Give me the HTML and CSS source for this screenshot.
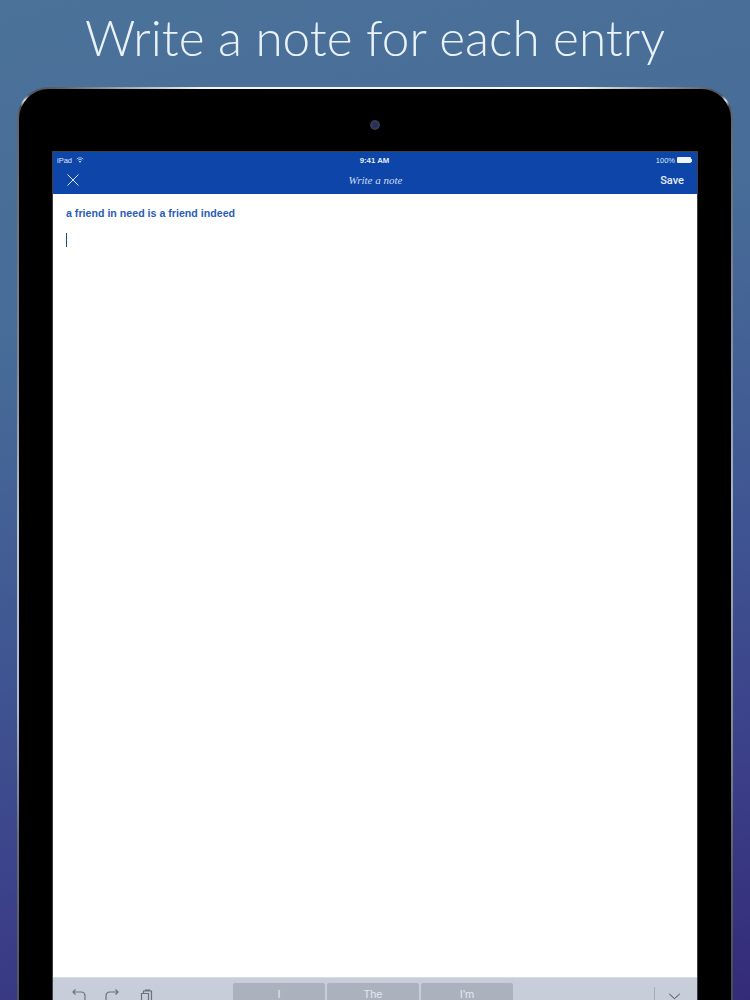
FILE: index.html
```html
<!DOCTYPE html>
<html lang="en">
<head>
<meta charset="utf-8">
<title>Write a note for each entry</title>
<link rel="stylesheet" href="styles.css">
</head>
<body>
<h1 class="headline">Write a note for each entry</h1>
<div class="device-rim">
  <div class="device">
    <div class="camera-row"><span class="camera"></span></div>
    <div class="screen">
      <div class="status-bar">
        <div class="status-left">
          <span>iPad</span>
          <svg class="wifi" viewBox="0 0 10 8" width="8" height="6"><path d="M0.600 2.700C3.100 0.400 6.900 0.400 9.400 2.700M2.200 4.300C3.800 2.900 6.200 2.900 7.800 4.300" stroke="#dfe8f8" stroke-width="1" fill="none"/><path d="M5 7.800 3.500 5.900C4.400 5.200 5.600 5.200 6.500 5.900Z" fill="#dfe8f8"/></svg>
        </div>
        <div class="status-time">9:41 AM</div>
        <div class="status-right">
          <span>100%</span>
          <span class="battery"></span><span class="battery-tip"></span>
        </div>
      </div>
      <div class="nav-bar">
        <svg class="close-icon" viewBox="0 0 12 12" width="12" height="12"><path d="M0.500 0.500 11.500 11.500M11.500 0.500 0.500 11.500" stroke="#dbe4f5" stroke-width="1" fill="none"/></svg>
        <div class="nav-title">Write a note</div>
        <div class="nav-save">Save</div>
      </div>
      <div class="editor">
        <p class="note-prompt">a friend in need is a friend indeed</p>
        <span class="caret"></span>
      </div>
      <div class="kb-toolbar">
        <div class="kb-tools">
          <svg class="tool" viewBox="0 0 16 16" width="16" height="16"><path d="M2 4H10C12.500 4 14 5.500 14 8V13M4.500 1.500 2 4 4.500 6.500" stroke="#6a7280" stroke-width="1.200" fill="none"/></svg>
          <svg class="tool" viewBox="0 0 16 16" width="16" height="16"><path d="M14 4H6C3.500 4 2 5.500 2 8V13M11.500 1.500 14 4 11.500 6.500" stroke="#6a7280" stroke-width="1.200" fill="none"/></svg>
          <svg class="tool" viewBox="0 0 16 16" width="16" height="16"><path d="M4.500 5.500H11.500V16H4.500ZM6.500 5.500V3H14.500V12.500H11.500M8.500 3V2H12.500V3" stroke="#6a7280" stroke-width="1.200" fill="none"/></svg>
        </div>
        <div class="suggestions">
          <div class="suggestion">I</div>
          <div class="suggestion">The</div>
          <div class="suggestion">I'm</div>
        </div>
        <div class="kb-hide">
          <svg viewBox="0 0 14 8" width="13" height="7"><path d="M1 1 7 6.500 13 1" stroke="#3b4048" stroke-width="1.100" fill="none"/></svg>
        </div>
      </div>
    </div>
  </div>
</div>
</body>
</html>
```
FILE: styles.css
```css
* { box-sizing: border-box; }
html, body { margin: 0; height: 1000px; }
body {
  width: 750px;
  overflow: hidden;
  background: linear-gradient(168deg, #4b7299 0%, #476c98 30%, #3f5592 58%, #3b3f88 80%, #342b78 100%);
  font-family: "Liberation Sans", Arial, sans-serif;
  display: flex;
  flex-direction: column;
}
.headline {
  margin: 0;
  height: 87px;
  padding-top: 7px;
  text-align: center;
  font-family: Lato, "Open Sans", sans-serif;
  font-weight: 300;
  font-size: 49.500px;
  line-height: 60px;
  color: #eaf2f9;
  white-space: nowrap;
}
.device-rim {
  flex: 1;
  margin: 0 17px;
  padding: 2px 2px 0;
  border-radius: 32px 32px 0 0;
  background:
    radial-gradient(circle at 8px 14px, #e6ebf0 0, rgba(230, 235, 240, 0) 7px) no-repeat,
    radial-gradient(circle at 708px 14px, #f4f6f8 0, rgba(244, 246, 248, 0) 6px) no-repeat,
    linear-gradient(90deg, #4a4f58 0%, #5c616b 6%, #aab0b8 16%, #f2f4f6 26%, #f6f7f9 78%, #8d909a 90%, #4b4d5a 100%) top / 100% 2px no-repeat,
    linear-gradient(180deg, #5c6068 0%, #7d8792 30%, #b7c6d4 48%, #aebad0 68%, #666c7e 82%, #4d5262 100%) left / 2px 100% no-repeat,
    linear-gradient(180deg, #5c6068 0%, #8b94a8 30%, #a8b4c4 45%, #7f8794 72%, #5b5e6c 85%, #4a4858 100%) right / 2px 100% no-repeat,
    #50545e;
}
.device {
  height: 100%;
  background: #000;
  border-radius: 30px 30px 0 0;
  padding: 0 34px;
  display: flex;
  flex-direction: column;
}
.camera-row {
  height: 63px;
  flex: none;
  display: flex;
  justify-content: center;
  padding-top: 31px;
}
.camera {
  width: 10px;
  height: 10px;
  border-radius: 50%;
  background: radial-gradient(circle, #23305f 0 30%, #3a3d4a 60%, #1c1c22 100%);
}
.screen {
  flex: 1;
  display: flex;
  flex-direction: column;
  background: #fff;
  min-height: 0;
  box-shadow: 0 0 0 1px #3c3f45;
}
.status-bar {
  height: 16px;
  flex: none;
  display: grid;
  grid-template-columns: 1fr auto 1fr;
  align-items: center;
  padding: 0 5px 0 4px;
  background: #0d45a8;
  color: #dfe8f8;
  font-size: 7.500px;
}
.status-left { display: flex; align-items: center; gap: 4px; }
.status-time { font-size: 7.800px; font-weight: bold; color: #e4ecfa; }
.status-right { display: flex; align-items: center; justify-content: flex-end; gap: 2px; }
.battery { width: 14px; height: 6px; background: #f2f5fb; border-radius: 1px; }
.battery-tip { width: 1px; height: 3px; background: #dfe8f8; margin-left: -2px; }
.nav-bar {
  height: 26px;
  flex: none;
  display: grid;
  grid-template-columns: 1fr auto 1fr;
  align-items: center;
  padding: 0 13px 2px 14px;
  background: #0d45a8;
  color: #eef3fb;
}
.close-icon { display: block; }
.nav-title {
  font-family: "Liberation Serif", "Times New Roman", serif;
  font-style: italic;
  font-size: 11px;
  color: #cfdcf3;
}
.nav-save {
  justify-self: end;
  font-family: Roboto, "Liberation Sans", sans-serif;
  font-size: 11px;
  font-weight: 500;
  color: #e6edf9;
}
.editor {
  flex: 1;
  min-height: 0;
  padding: 13px 13px 0;
}
.note-prompt {
  margin: 0;
  font-size: 10.650px;
  line-height: 13px;
  font-weight: bold;
  color: #2a5cb8;
}
.caret {
  display: block;
  width: 1px;
  height: 14px;
  margin-top: 13px;
  background: #2b3f8c;
}
.kb-toolbar {
  height: 23px;
  flex: none;
  display: flex;
  background: #c8ced9;
  border-top: 1px solid #d8dce3;
  padding-top: 5px;
  overflow: hidden;
}
.kb-tools {
  width: 180px;
  flex: none;
  display: flex;
  align-items: flex-start;
  gap: 17px;
  padding: 5px 0 0 18px;
}
.tool { flex: none; }
.suggestions { display: flex; gap: 2px; flex: none; }
.suggestion {
  width: 92px;
  height: 17px;
  padding-top: 5px;
  background: #abb2be;
  border-radius: 2px 2px 0 0;
  color: #e4e8ee;
  font-size: 11px;
  line-height: 12px;
  text-align: center;
}
.kb-hide {
  margin: 4px 0 0 141px;
  width: 40px;
  height: 13px;
  flex: none;
  display: flex;
  justify-content: center;
  padding-top: 6px;
  border-left: 1px solid #a4abb7;
}
.kb-hide svg { display: block; }
```
